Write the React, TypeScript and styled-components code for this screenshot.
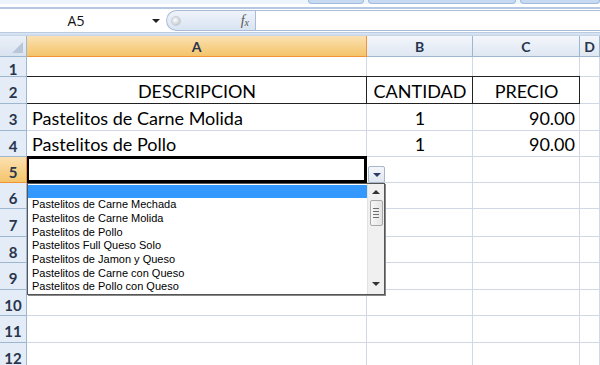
import styled, { createGlobalStyle, css } from 'styled-components';

interface CellProps {
    align?: 'left' | 'center' | 'right';
    boxed?: boolean;
    active?: boolean;
}

interface HeadProps {
    selected?: boolean;
}

interface RowData {
    n: number;
    h: number;
    a?: string;
    b?: string;
    c?: string;
    boxed?: boolean;
    center?: boolean;
    active?: boolean;
}

const rows: RowData[] = [
    { n: 1, h: 20 },
    { n: 2, h: 27, a: 'DESCRIPCION', b: 'CANTIDAD', c: 'PRECIO', boxed: true, center: true },
    { n: 3, h: 27, a: 'Pastelitos de Carne Molida', b: '1', c: '90.00' },
    { n: 4, h: 26, a: 'Pastelitos de Pollo', b: '1', c: '90.00' },
    { n: 5, h: 26, active: true },
    { n: 6, h: 26 },
    { n: 7, h: 28 },
    { n: 8, h: 26 },
    { n: 9, h: 27 },
    { n: 10, h: 26 },
    { n: 11, h: 27 },
    { n: 12, h: 27 },
];

const options = [
    '',
    'Pastelitos de Carne Mechada',
    'Pastelitos de Carne Molida',
    'Pastelitos de Pollo',
    'Pastelitos Full Queso Solo',
    'Pastelitos de Jamon y Queso',
    'Pastelitos de Carne con Queso',
    'Pastelitos de Pollo con Queso',
];

function App() {
    const template = ['21px', ...rows.map((r) => `${r.h}px`)].join(' ');

    return (
        <>
            <GlobalStyle />
            <Page>
                <Ribbon>
                    <RibbonTab w={56} />
                    <RibbonTab w={148} />
                    <RibbonTab w={80} />
                </Ribbon>
                <FormulaBar>
                    <NameBox>
                        <span>A5</span>
                        <NameArrow />
                    </NameBox>
                    <FxPill>
                        <PillDot />
                        <Fx>
                            f<sub>x</sub>
                        </Fx>
                    </FxPill>
                    <FormulaInput />
                </FormulaBar>
                <BarGap />
                <Sheet rowTemplate={template}>
                    <Corner>
                        <CornerMark />
                    </Corner>
                    <ColHead selected>A</ColHead>
                    <ColHead>B</ColHead>
                    <ColHead>C</ColHead>
                    <ColHead>D</ColHead>

                    {rows.map((r) => (
                        <Row key={r.n}>
                            <RowHead selected={r.active}>{r.n}</RowHead>
                            <Cell boxed={r.boxed} active={r.active} align={r.center ? 'center' : 'left'}>
                                {r.a}
                            </Cell>
                            <Cell boxed={r.boxed} align='center'>
                                {r.b}
                            </Cell>
                            <Cell boxed={r.boxed} align={r.center ? 'center' : 'right'}>
                                {r.c}
                            </Cell>
                            <Cell />
                        </Row>
                    ))}

                    <DropButton>
                        <Arrow />
                    </DropButton>

                    <DropList>
                        <Options>
                            {options.map((o, i) => (
                                <Option key={i} highlighted={i === 0}>
                                    {o}
                                </Option>
                            ))}
                        </Options>
                        <ScrollBar>
                            <ScrollArrow up />
                            <Thumb>
                                <Grip />
                                <Grip />
                                <Grip />
                                <Grip />
                            </Thumb>
                            <ScrollArrow />
                        </ScrollBar>
                    </DropList>
                </Sheet>
            </Page>
        </>
    );
}

export default App;

const GlobalStyle = createGlobalStyle`
    html, body {
        margin: 0;
        padding: 0;
        background: #fff;
    }
    * {
        box-sizing: border-box;
    }
`;

const Page = styled.div`
    width: 600px;
    height: 365px;
    overflow: hidden;
    display: flex;
    flex-direction: column;
    background: #fff;
    font-family: Lato, 'Liberation Sans', sans-serif;
`;

const Ribbon = styled.div`
    height: 9px;
    flex-shrink: 0;
    display: flex;
    justify-content: flex-end;
    gap: 4px;
    background: linear-gradient(#eef4fb 0 4px, #ffffff 4px 7px, #b4c8e2 7px 9px);
`;

const RibbonTab = styled.div<{ w: number }>`
    width: ${(props) => props.w}px;
    height: 4px;
    background: #c7daf1;
    border: 1px solid #9fbbdf;
    border-top: none;
    border-radius: 0 0 4px 4px;
`;

const FormulaBar = styled.div`
    height: 24px;
    flex-shrink: 0;
    display: flex;
    align-items: stretch;
    background: #fff;
    border-bottom: 1px solid #b9cbe2;
`;

const NameBox = styled.div`
    width: 166px;
    display: flex;
    align-items: center;
    justify-content: center;
    position: relative;
    font-family: 'Open Sans', 'Liberation Sans', sans-serif;
    font-size: 14px;
    color: #111;

    span {
        margin-right: 14px;
    }
`;

const NameArrow = styled.div`
    position: absolute;
    left: 152px;
    top: 10px;
    width: 0;
    height: 0;
    border-left: 4px solid transparent;
    border-right: 4px solid transparent;
    border-top: 4px solid #222;
`;

const FxPill = styled.div`
    width: 89px;
    margin: 1px 0;
    display: flex;
    align-items: center;
    justify-content: space-between;
    padding: 0 6px 0 4px;
    background: linear-gradient(#eef3fa, #d9e4f2);
    border: 1px solid #a9bcd6;
    border-right: none;
    border-radius: 11px 0 0 11px;
`;

const PillDot = styled.div`
    width: 10px;
    height: 10px;
    border-radius: 50%;
    background: radial-gradient(circle at 40% 40%, #ffffff, #b0b6bf);
    border: 1px solid #c9cfd8;
`;

const Fx = styled.div`
    font-family: 'Liberation Serif', serif;
    font-style: italic;
    font-size: 14px;
    color: #555;

    sub {
        font-size: 10px;
        vertical-align: -1px;
    }
`;

const FormulaInput = styled.div`
    flex: 1;
    margin: 1px 0;
    background: #fff;
    border: 1px solid #a9bcd6;
    border-right: none;
`;

const BarGap = styled.div`
    height: 3px;
    flex-shrink: 0;
    background: linear-gradient(#dfe8f4, #c3d3e8);
`;

const Sheet = styled.div<{ rowTemplate: string }>`
    position: relative;
    display: grid;
    grid-template-columns: 27px 340px 106px 107px 20px;
    grid-template-rows: ${(props) => props.rowTemplate};
`;

const Row = styled.div`
    display: contents;
`;

const Corner = styled.div`
    position: relative;
    border-right: 1px solid #9eb6ce;
    border-bottom: 1px solid #9eb6ce;
    background: linear-gradient(#eaf0f8, #d9e3f0);
`;

const CornerMark = styled.div`
    position: absolute;
    right: 3px;
    bottom: 3px;
    width: 0;
    height: 0;
    border-left: 11px solid transparent;
    border-bottom: 11px solid #b7c6d9;
`;

const headBase = css<HeadProps>`
    display: flex;
    align-items: center;
    justify-content: center;
    font-family: Lato, 'Liberation Sans', sans-serif;
    font-weight: 700;
    color: #27354d;
    border-bottom: 1px solid ${(props) => (props.selected ? '#f29436' : '#9eb6ce')};
    border-right: 1px solid ${(props) => (props.selected ? '#f29436' : '#9eb6ce')};
`;

const ColHead = styled.div<HeadProps>`
    ${headBase};
    font-size: 14px;
    padding-top: 1px;
    background: ${(props) =>
        props.selected ? 'linear-gradient(#fbe1b2, #f4c46a)' : 'linear-gradient(#f3f6fb, #dfe7f2)'};
`;

const RowHead = styled.div<HeadProps>`
    ${headBase};
    font-size: 15px;
    padding-top: 4px;
    background: ${(props) => (props.selected ? 'linear-gradient(#fbe1b2, #f4c46a)' : '#e4ecf7')};
`;

const Cell = styled.div<CellProps>`
    display: flex;
    align-items: flex-end;
    justify-content: ${(props) =>
        props.align === 'center' ? 'center' : props.align === 'right' ? 'flex-end' : 'flex-start'};
    padding: 0 4px 1px 5px;
    font-size: 18px;
    color: #000;
    white-space: nowrap;
    border-right: 1px solid #d0d7e5;
    border-bottom: 1px solid #d0d7e5;

    ${(props) =>
        props.boxed &&
        css`
            border-right: 1px solid #222;
            border-bottom: 1px solid #222;
            box-shadow: 0 -1px 0 #222;
        `}

    ${(props) =>
        props.active &&
        css`
            box-shadow: inset 0 0 0 2px #000, 0 -1px 0 #000;
            border-right: 1px solid #000;
            border-bottom: 1px solid #000;
        `}
`;

const DropButton = styled.div`
    position: absolute;
    left: 368px;
    top: 130px;
    width: 17px;
    height: 17px;
    display: flex;
    align-items: center;
    justify-content: center;
    background: linear-gradient(#f4f7fb, #dfe6f0);
    border: 1px solid #a6b6cc;
    border-radius: 2px;
`;

const Arrow = styled.div`
    width: 0;
    height: 0;
    border-left: 4px solid transparent;
    border-right: 4px solid transparent;
    border-top: 4px solid #2b3a66;
`;

const DropList = styled.div`
    position: absolute;
    left: 27px;
    top: 147px;
    width: 358px;
    height: 112px;
    display: flex;
    background: #fff;
    border: 1px solid #555;
    box-shadow: 1px 1px 0 #888;
`;

const Options = styled.div`
    flex: 1;
    padding-top: 1px;
    display: flex;
    flex-direction: column;
`;

const Option = styled.div<{ highlighted?: boolean }>`
    height: 13.7px;
    line-height: 13.7px;
    padding-left: 4px;
    font-family: 'Liberation Sans', Arial, sans-serif;
    font-size: 11px;
    color: #000;
    background: ${(props) => (props.highlighted ? '#3399ff' : 'transparent')};
`;

const ScrollBar = styled.div`
    width: 17px;
    display: flex;
    flex-direction: column;
    align-items: center;
    background: #f0f0f0;
    border-left: 1px solid #e2e2e2;
`;

const ScrollArrow = styled.div<{ up?: boolean }>`
    width: 0;
    height: 0;
    margin: ${(props) => (props.up ? '6px 0 6px' : 'auto 0 8px')};
    border-left: 4px solid transparent;
    border-right: 4px solid transparent;
    ${(props) => (props.up ? 'border-bottom: 4px solid #333;' : 'border-top: 4px solid #333;')}
`;

const Thumb = styled.div`
    width: 13px;
    height: 26px;
    display: flex;
    flex-direction: column;
    align-items: center;
    justify-content: center;
    gap: 2px;
    background: linear-gradient(90deg, #f7f7f7, #e4e4e4);
    border: 1px solid #a8a8a8;
    border-radius: 2px;
`;

const Grip = styled.div`
    width: 6px;
    height: 1px;
    background: #6f6f6f;
`;
